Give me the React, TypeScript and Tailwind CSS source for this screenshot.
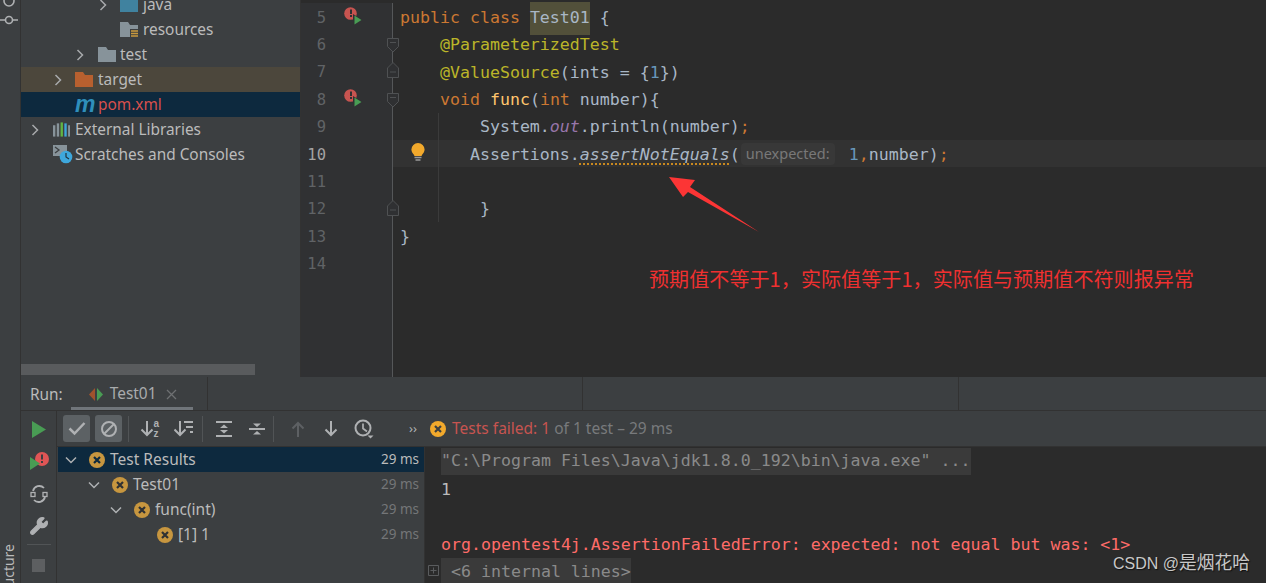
import { Wrench } from "lucide-react";
import type { ReactNode } from "react";

const mono = "font-['DejaVu_Sans_Mono',monospace] text-[16.6px] whitespace-pre";

function Chevron({ open = false, color = "#a8aaac" }: { open?: boolean; color?: string }) {
  return (
    <svg width="14" height="14" viewBox="0 0 14 14" fill="none" stroke={color} strokeWidth="1.5">
      {open ? <path d="M2 4.5l5 5 5-5" /> : <path d="M4.5 2l5 5-5 5" />}
    </svg>
  );
}

function Folder({ color, res = false }: { color: string; res?: boolean }) {
  return (
    <svg width="18" height="15" viewBox="0 0 18 15">
      <path d="M0 0h8l2 3h8v12H0z" fill={color} />
      {res && (
        <g>
          <rect x="10" y="7" width="8" height="8" fill="#3c3f41" />
          <path d="M11 9h7M11 11.5h7M11 14h7" stroke="#c99a3e" strokeWidth="1.5" />
        </g>
      )}
    </svg>
  );
}

function LibIcon() {
  return (
    <svg className="ml-px" width="18" height="15" viewBox="0 0 18 15">
      <rect x="0" y="3" width="2.5" height="12" fill="#87939a" />
      <rect x="4" y="1" width="2.5" height="14" fill="#87939a" />
      <rect x="8" y="0" width="2.5" height="15" fill="#62b543" />
      <rect x="12" y="1" width="2.5" height="14" fill="#40a5d8" />
      <rect x="16" y="3" width="2" height="12" fill="#87939a" />
    </svg>
  );
}

function ScratchIcon() {
  return (
    <svg className="ml-px shrink-0" width="20" height="20" viewBox="0 0 20 20">
      <rect x="0" y="0" width="14" height="11" fill="#87939a" />
      <path d="M2 2l4 3-4 3" fill="none" stroke="#3c3f41" strokeWidth="1.3" />
      <circle cx="13" cy="12" r="6.3" fill="#3ea7dc" />
      <path d="M13 8v4l3 2" fill="none" stroke="#22323c" strokeWidth="1.2" />
    </svg>
  );
}

function TreeRow({
  pad,
  icon,
  label,
  chevron = true,
  className = "",
  labelClass = "text-[#bbbbbb]",
}: {
  pad: string;
  icon: ReactNode;
  label: string;
  chevron?: boolean;
  className?: string;
  labelClass?: string;
}) {
  return (
    <div className={`flex h-[25px] shrink-0 items-center ${pad} ${className}`}>
      <span className="flex w-[14px] items-center justify-center">{chevron && <Chevron />}</span>
      <span className="ml-[10px] flex w-[18px] items-center justify-start">{icon}</span>
      <span className={`ml-[5px] ${labelClass}`}>{label}</span>
    </div>
  );
}

function ProjectTree() {
  return (
    <div className="flex w-[279px] shrink-0 flex-col overflow-hidden bg-[#3c3f41] font-['Noto_Sans',sans-serif] text-[15.4px]">
      <div className="-mt-[8px] flex flex-col">
        <TreeRow pad="pl-[75px]" icon={<Folder color="#40829f" />} label="java" />
        <TreeRow pad="pl-[75px]" chevron={false} icon={<Folder color="#87939a" res />} label="resources" />
        <TreeRow
          pad="pl-[52px]"
          icon={
            <span className="ml-px flex">
              <Folder color="#87939a" />
            </span>
          }
          label="test"
        />
        <TreeRow pad="pl-[30px]" className="bg-[#4c473c]" icon={<Folder color="#b8602f" />} label="target" />
        <TreeRow
          pad="pl-[30px]"
          className="bg-[#0d293e]"
          chevron={false}
          labelClass="text-[#d8504d]"
          icon={
            <span className="font-['Liberation_Sans',sans-serif] text-[23px] leading-none font-bold text-[#2f8fbb] italic">
              m
            </span>
          }
          label="pom.xml"
        />
        <TreeRow pad="pl-[7px]" icon={<LibIcon />} label="External Libraries" />
        <TreeRow pad="pl-[7px]" chevron={false} icon={<ScratchIcon />} label="Scratches and Consoles" />
      </div>
      <div className="mt-auto mb-[2px] h-[11px] w-[234px] bg-[#595b5d]" />
    </div>
  );
}

function RunMark() {
  return (
    <svg width="18" height="18" viewBox="0 0 18 18">
      <circle cx="6.5" cy="6.5" r="6.3" fill="#c75450" />
      <rect x="6" y="2.5" width="2" height="4.5" fill="#2f3032" />
      <rect x="6" y="8" width="2" height="2" fill="#2f3032" />
      <path d="M9 7l9 5.5L9 18z" fill="#2f3032" />
      <path d="M10.5 8.500l7 4.500-7 4.500z" fill="#499c54" />
    </svg>
  );
}

function FoldDown() {
  return (
    <svg width="12" height="15" viewBox="0 0 12 15" fill="#2f3032" stroke="#4f5153" strokeWidth="1">
      <path d="M.5.5h11v8L6 14 .5 8.500z" />
      <path d="M3 4.500h6" />
    </svg>
  );
}

function FoldUp() {
  return (
    <svg width="12" height="16" viewBox="0 0 12 16" fill="#2f3032" stroke="#4f5153" strokeWidth="1">
      <path d="M6 .5l5.500 5.500v9.500H.5V6z" />
      <path d="M3 10h6" />
    </svg>
  );
}

function Bulb() {
  return (
    <svg width="14" height="19" viewBox="0 0 14 19">
      <path
        d="M7 0a6.600 6.600 0 0 1 6.600 6.600c0 2.400-1.400 3.700-2.300 5-.4.500-.6 1-.7 1.400H3.400c-.1-.4-.3-.9-.7-1.400C1.800 10.300.4 9 .4 6.600A6.600 6.600 0 0 1 7 0z"
        fill="#f2a92c"
      />
      <path d="M3.500 14.500h7M4.500 17h5" stroke="#9a9a9a" strokeWidth="1.400" />
    </svg>
  );
}

function CodeLine({
  n,
  children,
  run,
  fold,
  foldTop,
  current,
  guide,
}: {
  n: number;
  children?: ReactNode;
  run?: boolean;
  fold?: ReactNode;
  foldTop?: string;
  current?: boolean;
  guide?: boolean;
}) {
  return (
    <div className="relative flex h-[27.4px] shrink-0 items-center">
      <div className="flex h-full w-[92px] shrink-0 items-center border-r border-[#555759] bg-[#303133] pt-[3px]">
        <span
          className={`w-[25px] text-right font-['DejaVu_Sans_Mono',monospace] text-[15.500px] ${
            current ? "text-[#a4a3a3]" : "text-[#606366]"
          }`}
        >
          {n}
        </span>
        <span className="ml-[18px] flex w-[18px] -translate-y-[2px]">{run && <RunMark />}</span>
      </div>
      <div className={`flex h-full flex-1 items-center pt-[3px] pl-[7px] ${mono} ${current ? "bg-[#323232]" : ""}`}>
        {children}
      </div>
      {fold && <div className={`absolute left-[86px] flex ${foldTop}`}>{fold}</div>}
      {guide && <div className="absolute top-0 left-[137px] h-full w-px bg-[#3b3b3b]" />}
      {current && (
        <div className="absolute top-[3px] left-[110px] flex">
          <Bulb />
        </div>
      )}
    </div>
  );
}

function Editor() {
  return (
    <div className="relative flex min-w-0 flex-1 flex-col overflow-hidden border-l border-[#323232] bg-[#2b2b2b] pt-[3px] text-[#a9b7c6]">
      <CodeLine n={5} run>
        <span className="text-[#cc7832]">public class </span>
        <span className="bg-[#52503a] py-[4px]">Test01</span>
        <span>{" {"}</span>
      </CodeLine>
      <CodeLine n={6} fold={<FoldDown />} foldTop="top-[8px]">
        <span className="text-[#bbb529]">{"    @ParameterizedTest"}</span>
      </CodeLine>
      <CodeLine n={7} fold={<FoldUp />} foldTop="top-[4px]">
        <span className="text-[#bbb529]">{"    @ValueSource"}</span>
        {"(ints = {"}
        <span className="text-[#6897bb]">1</span>
        {"})"}
      </CodeLine>
      <CodeLine n={8} run fold={<FoldDown />} foldTop="top-[8px]">
        <span className="text-[#cc7832]">{"    void "}</span>
        <span className="text-[#ffc66d]">func</span>
        {"("}
        <span className="text-[#cc7832]">int </span>
        {"number){"}
      </CodeLine>
      <CodeLine n={9} guide>
        {"        System."}
        <span className="text-[#9876aa] italic">out</span>
        {".println(number)"}
        <span className="text-[#cc7832]">;</span>
      </CodeLine>
      <CodeLine n={10} current guide>
        {"       Assertions."}
        <span className="underline decoration-[#c9891f] decoration-dotted decoration-2 underline-offset-[4px] italic">
          assertNotEquals
        </span>
        {"("}
        <span className="mr-[14px] ml-px flex h-[22px] w-[94px] -translate-y-[1px] items-center justify-center rounded-[4px] bg-[#383838] font-['Noto_Sans',sans-serif] text-[14.500px] text-[#787878]">
          unexpected:
        </span>
        <span className="text-[#6897bb]">1</span>
        <span className="text-[#cc7832]">,</span>
        {"number)"}
        <span className="text-[#cc7832]">;</span>
      </CodeLine>
      <CodeLine n={11} guide />
      <CodeLine n={12} guide fold={<FoldUp />} foldTop="top-[5px]">
        {"        }"}
      </CodeLine>
      <CodeLine n={13}>{"}"}</CodeLine>
      <CodeLine n={14} />
      <div className="w-[92px] flex-1 border-r border-[#555759] bg-[#303133]" />

      {/* red arrow and note drawn on top of the screenshot */}
      <svg className="absolute top-0 left-0" width="480" height="240" viewBox="301 0 480 240">
        <path d="M669 177l26 3-5 7 69 45-71-40-5 5z" fill="#fc3535" />
      </svg>
      <div className="absolute top-[264px] left-[348px] font-['Noto_Sans_CJK_SC',sans-serif] text-[20px] leading-[30px] tracking-[0.1px] whitespace-nowrap text-[#f03030]">
        预期值不等于1，实际值等于1，实际值与预期值不符则报异常
      </div>
    </div>
  );
}

function FailIcon({ color = "#c7963f", cross = "#2b2b2b" }: { color?: string; cross?: string }) {
  return (
    <svg width="16" height="16" viewBox="0 0 16 16">
      <circle cx="8" cy="8" r="8" fill={color} />
      <path d="M5 5l6 6M11 5l-6 6" stroke={cross} strokeWidth="2.200" />
    </svg>
  );
}

function ToolIcon({ children }: { children: ReactNode }) {
  return <span className="flex h-full w-[33px] items-center justify-center">{children}</span>;
}

function ToolSep({ className = "" }: { className?: string }) {
  return <span className={`h-[26px] w-px bg-[#515456] ${className}`} />;
}

function DownArrow({ color = "#afb1b3" }: { color?: string }) {
  return (
    <svg width="14" height="16" viewBox="0 0 14 16" fill="none" stroke={color} strokeWidth="2">
      <path d="M7 0v14M1.500 8.500L7 14l5.500-5.500" />
    </svg>
  );
}

function Toolbar() {
  return (
    <div className="flex h-[36px] shrink-0 items-center border-b border-[#323232] bg-[#3c3f41] pl-[6px]">
      <span className="flex h-[27px] w-[27px] items-center justify-center rounded-[3px] bg-[#5c6164]">
        <svg width="18" height="15" viewBox="0 0 18 15" fill="none" stroke="#afb1b3" strokeWidth="2.500">
          <path d="M1.500 7.500l5 5L16.500 2" />
        </svg>
      </span>
      <span className="ml-[5px] flex h-[27px] w-[27px] items-center justify-center rounded-[3px] bg-[#5c6164]">
        <svg width="18" height="18" viewBox="0 0 18 18" fill="none" stroke="#afb1b3" strokeWidth="2">
          <circle cx="9" cy="9" r="7" />
          <path d="M4 14L14 4" />
        </svg>
      </span>
      <ToolSep className="mx-[6px]" />
      <span className="flex h-full items-center">
        <ToolIcon>
          <span className="flex w-[22px] -translate-x-[1px] items-center">
            <DownArrow />
            <span className="flex flex-col font-['Liberation_Sans',sans-serif] text-[10px] leading-[10px] font-bold text-[#afb1b3]">
              <span>a</span>
              <span>z</span>
            </span>
          </span>
        </ToolIcon>
        <ToolIcon>
          <svg width="22" height="16" viewBox="0 0 22 16" fill="none" stroke="#afb1b3" strokeWidth="2">
            <path d="M6 0v14M.5 8.500L6 14l5.500-5.500M10 1h9M12 6h7M16 11h3" />
          </svg>
        </ToolIcon>
      </span>
      <ToolSep className="ml-px" />
      <span className="ml-[4px] flex h-full items-center">
        <ToolIcon>
          <svg width="16" height="16" viewBox="0 0 16 16">
            <path d="M0 1h16M0 15h16" stroke="#afb1b3" strokeWidth="2" />
            <path d="M8 3.500l4 3.500H4zM8 12.500L4 9h8z" fill="#afb1b3" />
          </svg>
        </ToolIcon>
        <ToolIcon>
          <svg width="16" height="16" viewBox="0 0 16 16">
            <path d="M0 8h16" stroke="#afb1b3" strokeWidth="2" />
            <path d="M8 6L4 2.500h8zM8 10l4 3.500H4z" fill="#afb1b3" />
          </svg>
        </ToolIcon>
      </span>
      <ToolSep />
      <span className="ml-[7px] flex h-full items-center">
        <ToolIcon>
          <span className="flex rotate-180">
            <DownArrow color="#5d6063" />
          </span>
        </ToolIcon>
        <ToolIcon>
          <DownArrow />
        </ToolIcon>
        <ToolIcon>
          <svg width="20" height="20" viewBox="0 0 20 20" fill="none" stroke="#afb1b3" strokeWidth="2">
            <circle cx="9" cy="9" r="7.500" />
            <path d="M9 4.500V9.500l4 3" strokeWidth="1.700" />
            <path d="M13.500 16.500h6l-3 3z" fill="#afb1b3" stroke="none" />
          </svg>
        </ToolIcon>
      </span>
      <span className="ml-[29px] font-['Noto_Sans',sans-serif] text-[13px] text-[#afb1b3]">››</span>
      <span className="ml-[13px] flex">
        <FailIcon color="#f2a92c" cross="#3c3f41" />
      </span>
      <span className="ml-[6px] font-['Noto_Sans',sans-serif] text-[15.500px] text-[#787a7c]">
        <span className="text-[#c75450]">Tests failed: 1</span> of 1 test – 29 ms
      </span>
    </div>
  );
}

function ResultRow({
  pad,
  label,
  leaf,
  selected,
}: {
  pad: string;
  label: string;
  leaf?: boolean;
  selected?: boolean;
}) {
  return (
    <div className={`flex h-[25px] items-center pr-[5px] ${pad} ${selected ? "bg-[#0d293e]" : ""}`}>
      <span className="flex w-[14px] justify-center">{!leaf && <Chevron open color="#afb1b3" />}</span>
      <span className="ml-[11px] flex">
        <FailIcon cross={selected ? "#0d293e" : "#2f3133"} />
      </span>
      <span className="ml-[5px] text-[#bbbbbb]">{label}</span>
      <span className={`ml-auto text-[13.500px] ${selected ? "text-[#bbbbbb]" : "text-[#747678]"}`}>29 ms</span>
    </div>
  );
}

function RunPanel() {
  return (
    <div className="flex h-[206px] shrink-0 flex-col bg-[#3c3f41]">
      <div className="flex h-[34px] shrink-0 border-b border-[#323232] font-['Noto_Sans',sans-serif] text-[15.400px] text-[#bbbbbb]">
        <div className="flex w-[187px] items-stretch border-r border-[#323232]">
          <span className="flex items-center pt-[2px] pl-[9px]">Run:</span>
          <div className="ml-[8px] flex w-[122px] items-center border-b-[3px] border-[#70757a] pt-[4px] pl-[18px]">
            <svg width="14" height="13" viewBox="0 0 14 13">
              <path d="M6 0v13L0 6.500z" fill="#a0522d" />
              <path d="M8 0v13l6-6.500z" fill="#499c54" />
            </svg>
            <span className="ml-[7px] text-[#a9abad]">Test01</span>
            <svg className="ml-[10px]" width="11" height="11" viewBox="0 0 11 11" stroke="#6e7072" strokeWidth="1.300">
              <path d="M1 1l9 9M10 1l-9 9" />
            </svg>
          </div>
        </div>
        <div className="w-[375px] border-r border-[#323232]" />
        <div className="w-[376px] border-r border-[#323232]" />
      </div>
      <div className="flex min-h-0 flex-1">
        <div className="flex w-[36px] shrink-0 flex-col items-center border-r border-[#323232] pt-[10px]">
          <svg className="ml-px" width="14" height="17" viewBox="0 0 14 17">
            <path d="M0 0l14 8.500L0 17z" fill="#499c54" />
          </svg>
          <svg className="mt-[14px]" width="20" height="18" viewBox="0 0 20 18">
            <circle cx="13" cy="7" r="7" fill="#e05555" />
            <rect x="12" y="2.500" width="2" height="5" fill="#3c3f41" />
            <rect x="12" y="9" width="2" height="2" fill="#3c3f41" />
            <path d="M1 5l10 6.500L1 18z" fill="#499c54" />
          </svg>
          <svg className="mt-[14px]" width="18" height="20" viewBox="0 0 18 20" fill="none" stroke="#afb1b3" strokeWidth="1.800">
            <path d="M3 7a6.500 6.500 0 0 1 11-3M15 13a6.500 6.500 0 0 1-11 3" />
            <rect x="1" y="8.500" width="4" height="4" strokeWidth="1.300" />
            <rect x="13" y="8.500" width="4" height="4" strokeWidth="1.300" />
          </svg>
          <Wrench className="mt-[12px]" size={20} fill="#afb1b3" stroke="#afb1b3" strokeWidth={1.500} />
          <span className="mt-[8px] h-px w-[24px] bg-[#515456]" />
          <span className="mt-[14px] h-[13px] w-[13px] bg-[#5d5f61]" />
        </div>
        <div className="flex min-w-0 flex-1 flex-col">
          <Toolbar />
          <div className="flex min-h-0 flex-1">
            <div className="w-[368px] shrink-0 border-r border-[#323232] pl-px font-['Noto_Sans',sans-serif] text-[15.500px]">
              <ResultRow pad="pl-[6px]" label="Test Results" selected />
              <ResultRow pad="pl-[29px]" label="Test01" />
              <ResultRow pad="pl-[51px]" label="func(int)" />
              <ResultRow pad="pl-[74px]" label="[1] 1" leaf />
            </div>
            <div className={`relative min-w-0 flex-1 overflow-hidden bg-[#2b2b2b] pt-px pl-[16px] ${mono}`}>
              <div className="flex h-[27.4px] w-[530px] items-center bg-[#3a3a3a] text-[#8a8a8a]">
                {'"C:\\Program Files\\Java\\jdk1.8.0_192\\bin\\java.exe" ...'}
              </div>
              <div className="flex h-[27.4px] items-center pt-[2px] text-[#bbbbbb]">1</div>
              <div className="h-[27.4px]" />
              <div className="flex h-[27.4px] items-center pt-[3px] text-[#ff6b68]">
                org.opentest4j.AssertionFailedError: expected: not equal but was: &lt;1&gt;
              </div>
              <div className="flex h-[27.4px] w-[190px] items-center bg-[#3a3a3a] pt-[3px] text-[#8a8a8a]">
                {" <6 internal lines>"}
              </div>
              <svg className="absolute top-[118px] left-[3px]" width="11" height="11" viewBox="0 0 11 11" fill="none" stroke="#5a5c5e">
                <path d="M.5.5h10v10H.500zM5.500 2.500v6M2.500 5.500h6" />
              </svg>
              <span className="absolute right-[16px] bottom-[7px] font-['Liberation_Sans','Noto_Sans_CJK_SC',sans-serif] text-[16px] leading-[24px] whitespace-nowrap text-[#c8c8c8] [text-shadow:1px_1px_1px_#111]">
                CSDN @<span className="text-[17.750px]">是烟花哈</span>
              </span>
            </div>
          </div>
        </div>
      </div>
    </div>
  );
}

function LeftStrip() {
  return (
    <div className="flex h-full w-[21px] shrink-0 flex-col items-center justify-between overflow-hidden border-r border-[#323232] bg-[#3c3f41]">
      <svg className="mt-[-4px] ml-[-3px]" width="18" height="30" viewBox="0 0 18 30" fill="none" stroke="#afb1b3" strokeWidth="1.600">
        <circle cx="9" cy="5" r="5" />
        <circle cx="9" cy="24" r="3.500" />
        <path d="M0 24h5.500M12.500 24H18" />
      </svg>
      <span className="-mb-[22px] -ml-[3px] rotate-180 font-['Noto_Sans',sans-serif] text-[14px] leading-[18px] text-[#bbbbbb] [writing-mode:vertical-rl]">
        Structure
      </span>
    </div>
  );
}

export default function App() {
  return (
    <div className="flex h-[583px] w-[1266px] overflow-hidden bg-[#2b2b2b]">
      <LeftStrip />
      <div className="flex min-w-0 flex-1 flex-col">
        <div className="flex min-h-0 flex-1 overflow-hidden">
          <ProjectTree />
          <Editor />
        </div>
        <RunPanel />
      </div>
    </div>
  );
}
